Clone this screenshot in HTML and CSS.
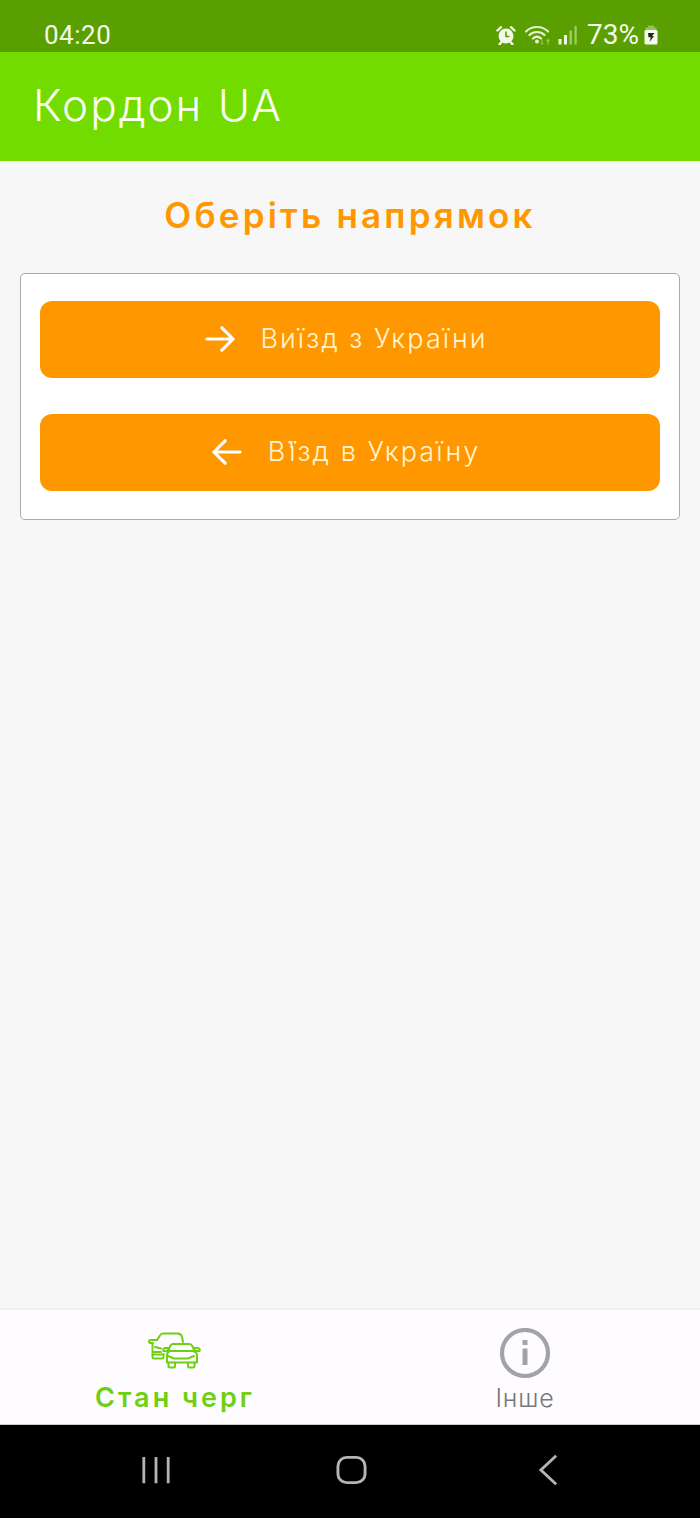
FILE: index.html
```html
<!DOCTYPE html>
<html lang="uk">
<head>
<meta charset="utf-8">
<title>Кордон UA</title>
<link rel="stylesheet" href="styles.css">
</head>
<body>
<div class="screen">
  <header class="status">
    <span class="clock">04:20</span>
    <div class="status-icons">
      <svg class="ic-alarm" viewBox="0 0 20 20" width="20" height="20"><circle cx="10" cy="11" r="7.500" fill="#f4f8ea"/><path d="M1.500 5.500 5 2.200M18.500 5.500 15 2.200M5 17.500l-1.500 2M15 17.500l1.500 2" stroke="#f4f8ea" stroke-width="2.400" stroke-linecap="round"/><path d="M10 6.500V11.500H13.500" stroke="#5a9f00" stroke-width="1.600" fill="none"/></svg>
      <svg class="ic-wifi" viewBox="0 0 27 22" width="27" height="22"><path d="M1 7.500C7 1.500 17 1.500 23 7.500M4.500 11C8.500 7 15.500 7 19.500 11M8 14.500C10.500 12.300 13.500 12.300 16 14.500" fill="none" stroke="#e4f0d0" stroke-width="2.200" stroke-linecap="round"/><circle cx="12" cy="17.500" r="2" fill="#e4f0d0"/><path d="M17 15.500v5M15.500 18.800l1.500 1.500 1.500-1.500" fill="none" stroke="#9cc660" stroke-width="1"/><path d="M23 20.500v-5M21.500 17l1.500-1.500 1.500 1.500" fill="none" stroke="#9cc660" stroke-width="1.200"/></svg>
      <svg class="ic-signal" viewBox="0 0 19 20" width="19" height="20"><rect x="0.500" y="14" width="3" height="5.500" fill="#eef5e0"/><rect x="6" y="10" width="3" height="9.500" fill="#eef5e0"/><rect x="11.500" y="5.500" width="2.400" height="14" fill="#a3cb6a"/><rect x="16.500" y="1" width="2.200" height="18.500" fill="#a3cb6a"/></svg>
      <span class="percent">73%</span>
      <svg class="ic-batt" viewBox="0 0 14 20" width="14" height="20"><path d="M4 0.500h6v2h2.500v4h-11v-4h2.500z" fill="#94c25a"/><rect x="0.500" y="5" width="13" height="14.500" rx="1.500" fill="#f6f9ee"/><path d="M4 8h6.500L8 11h2L5.500 17 6.800 12.200H4.500z" fill="#1c2a10"/></svg>
    </div>
  </header>
  <div class="appbar"><h1 class="app-title">Кордон UA</h1></div>
  <main class="content">
    <h2 class="heading">Оберіть напрямок</h2>
    <section class="card">
      <button class="dir-btn" type="button">
        <svg class="arrow" viewBox="0 0 32 30" width="30" height="28"><path d="M2 15H30M18 3 30 15 18 27" fill="none" stroke="#fff" stroke-width="3.400" stroke-linecap="round" stroke-linejoin="round"/></svg>
        <span>Виїзд з України</span>
      </button>
      <button class="dir-btn" type="button">
        <svg class="arrow" viewBox="0 0 32 30" width="30" height="28"><path d="M30 15H2M14 3 2 15 14 27" fill="none" stroke="#fff" stroke-width="3.400" stroke-linecap="round" stroke-linejoin="round"/></svg>
        <span>В<span class="apos">'</span>їзд в Україну</span>
      </button>
    </section>
  </main>
  <nav class="tabs">
    <div class="tab tab-active">
      <svg class="tab-icon" viewBox="0 0 54 38" width="54" height="38" fill="none" stroke="#6fcf12" stroke-width="2" stroke-linecap="round" stroke-linejoin="round">
        <path d="M9 8 12 3.500Q13 1.500 15 1.500H30Q33 1.500 34 5L35 10"/>
        <path d="M9 8H3Q.8 8 1 10L2 11H5M4.500 11V25Q4.500 26.500 6 26.500H14Q15.500 26.500 15.500 25V22M5 20H13M5 22.500H15.500M7 15 13 16.500"/>
        <path d="M19.500 19 22.500 13.500Q23.500 12 25 12H41Q43 12 44 13.500L47 19"/>
        <path d="M19 30.500V23Q19 20 22 19H45Q49 20 49 23V30.500ZM20 19H15.500Q14.500 17 17 16H20.500L21.500 18M47 19H51.500Q52.500 17 50 16H46.500L45.500 18M20 24 26 26.500H40L46 24"/>
        <path d="M20.500 30.500V34Q20.500 35.500 22 35.500H25.500Q27 35.500 27 34V30.500M40 30.500V34Q40 35.500 41.500 35.500H45Q46.500 35.500 46.500 34V30.500"/>
      </svg>
      <span class="tab-label label-active">Стан черг</span>
    </div>
    <div class="tab">
      <svg class="tab-icon" viewBox="0 0 52 52" width="52" height="52"><circle cx="26" cy="25" r="23" fill="none" stroke="#a3a3a6" stroke-width="4.200"/><rect x="23.500" y="12" width="5" height="5" fill="#a3a3a6"/><rect x="23.500" y="20.500" width="5" height="16.500" fill="#a3a3a6"/></svg>
      <span class="tab-label">Інше</span>
    </div>
  </nav>
  <footer class="sysnav">
    <svg class="nav-bars" viewBox="0 0 32 30" width="30" height="30"><path d="M3 1V29M16 1V29M29 1V29" stroke="#b4b4b4" stroke-width="3"/></svg>
    <svg class="nav-home" viewBox="0 0 32 30" width="31" height="30"><rect x="2" y="2" width="28" height="26" rx="9" fill="none" stroke="#b4b4b4" stroke-width="3"/></svg>
    <svg class="nav-back" viewBox="0 0 22 34" width="21" height="34"><path d="M19 2 3 17 19 32" fill="none" stroke="#b4b4b4" stroke-width="3"/></svg>
  </footer>
</div>
</body>
</html>
```
FILE: styles.css
```css
* { box-sizing: border-box; }
html, body { margin: 0; padding: 0; }
body { font-family: "Inter", "Noto Sans", "DejaVu Sans", sans-serif; }
.screen { width: 700px; height: 1518px; display: flex; flex-direction: column; background: #f7f7f7; overflow: hidden; }

.status { height: 52px; flex: none; background: #5a9f00; color: #f4f8ea; display: flex; align-items: center; justify-content: space-between; padding: 17px 42px 0 44px; font-family: "Roboto", sans-serif; }
.clock { font-size: 26px; letter-spacing: .5px; line-height: 1; }
.status-icons { display: flex; align-items: center; }
.percent { font-size: 28px; line-height: 1; margin-left: 10px; }
.ic-wifi { margin-left: 9px; }
.ic-signal { margin-left: 6px; }
.ic-batt { margin-left: 5px; }

.appbar { height: 109px; flex: none; background: #72dc00; display: flex; align-items: center; padding-left: 33px; }
.app-title { margin: 0 0 4px; color: #fbfff0; font-size: 44px; font-weight: 300; letter-spacing: 2px; line-height: 1; }

.content { flex: 1; padding: 0 20px; display: flex; flex-direction: column; }
.heading { margin: 33px 0 37px; height: 42px; text-align: center; color: #ff9800; font-size: 35px; font-weight: 600; letter-spacing: 3.200px; line-height: 42px; }
.card { height: 247px; background: #fff; border: 1px solid #aaa; border-radius: 5px; padding: 27px 19px; display: flex; flex-direction: column; gap: 36px; }
.dir-btn { height: 77px; flex: none; border: none; border-radius: 12px; background: #ff9800; color: #fff4d2; font: inherit; font-size: 27px; font-weight: 300; letter-spacing: 2px; display: flex; align-items: center; justify-content: center; gap: 26px; padding: 0 8px 2px 0; }
.apos { letter-spacing: -6px; }

.tabs { height: 116px; flex: none; background: #fefcff; border-top: 2px solid #f0f0f0; display: grid; grid-template-columns: 1fr 1fr; }
.tab { display: flex; flex-direction: column; align-items: center; color: #77777a; }
.tab-icon { display: block; margin-top: 18px; height: 52px; }
.tab-label { font-size: 25px; font-weight: 300; line-height: 30px; letter-spacing: .8px; margin-top: 3px; }
.label-active { color: #6fcf12; font-weight: 600; font-size: 27px; letter-spacing: 3px; }
.tab-active .tab-icon { height: 38px; margin-top: 22px; margin-bottom: 10px; }

.sysnav { height: 94px; flex: none; background: #000; display: flex; align-items: center; padding: 0 0 4px 141px; border-top: 1px solid #ccc; }
.nav-home { margin-left: 165px; }
.nav-back { margin-left: 171px; }
```
